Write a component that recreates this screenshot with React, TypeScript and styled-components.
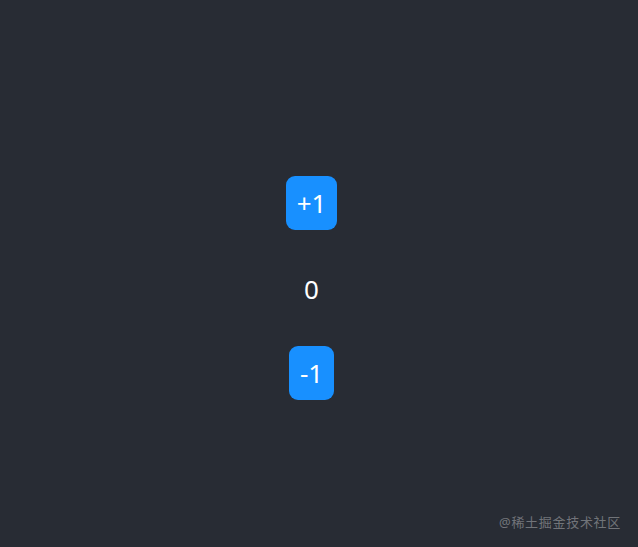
import { useState } from "react";
import styled, { createGlobalStyle } from "styled-components";

const GlobalStyle = createGlobalStyle`
    html, body {
        margin: 0;
        padding: 0;
        background-color: #282c34;
        font-family: "Noto Sans", "Noto Sans CJK SC", sans-serif;
    }
`

function App() {
    const [count, setCount] = useState(0)

    return (
        <>
            <GlobalStyle />
            <Page>
                <Counter>
                    <Button onClick={() => setCount(count + 1)}>+1</Button>
                    <Value>{count}</Value>
                    <Button onClick={() => setCount(count - 1)}>-1</Button>
                </Counter>
                <Watermark>@稀土掘金技术社区</Watermark>
            </Page>
        </>
    )
}

export default App

const Page = styled.main`
    position: relative;
    width: 100%;
    height: 547px;
    overflow: hidden;
    background-color: #282c34;
`

const Counter = styled.div`
    display: flex;
    flex-direction: column;
    align-items: center;
    padding-top: 176px;
    padding-right: 15px;
`

const Button = styled.button`
    height: 54px;
    padding: 0 11px;
    border: none;
    border-radius: 9px;
    background-color: #1890ff;
    color: #ffffff;
    font-family: inherit;
    font-size: 26px;
    line-height: 54px;
    cursor: pointer;
`

const Value = styled.div`
    margin: 44px 0 41px;
    height: 31px;
    color: #ffffff;
    font-size: 26px;
    line-height: 31px;
`

const Watermark = styled.div`
    position: absolute;
    right: 17px;
    bottom: 16px;
    color: rgba(255, 255, 255, 0.35);
    font-size: 13px;
    letter-spacing: 0.7px;
`
